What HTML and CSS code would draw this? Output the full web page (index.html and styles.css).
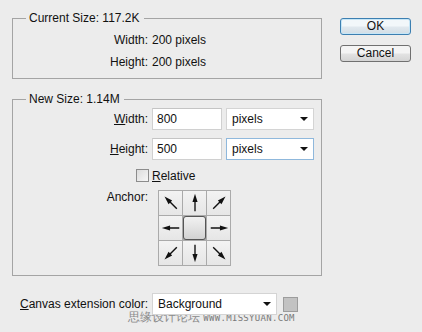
FILE: index.html
```html
<!DOCTYPE html>
<html>

<head>
    <title>Canvas Size</title>
    <link rel="stylesheet" href="styles.css">
</head>

<body>
    <svg class="defs" width="0" height="0">
        <symbol id="arrow" viewBox="0 0 24 24">
            <path d="M12 21V9" stroke="#111" stroke-width="1.5" fill="none"/>
            <path d="M12 2l-2.8 9h5.6z" fill="#111"/>
        </symbol>
    </svg>

    <div class="dialog">
        <div class="main">
            <fieldset class="group group-current">
                <legend>Current Size: 117.2K</legend>
                <div class="row info-row"><span class="label">Width:</span><span class="value">200 pixels</span></div>
                <div class="row info-row"><span class="label">Height:</span><span class="value">200 pixels</span></div>
            </fieldset>

            <fieldset class="group group-new">
                <legend>New Size: 1.14M</legend>
                <div class="row field-row">
                    <label class="label" for="newWidth"><u>W</u>idth:</label>
                    <input class="num-input" id="newWidth" type="text" value="800">
                    <div class="select units">pixels<span class="caret"></span></div>
                </div>
                <div class="row field-row">
                    <label class="label" for="newHeight"><u>H</u>eight:</label>
                    <input class="num-input" id="newHeight" type="text" value="500">
                    <div class="select units focused">pixels<span class="caret"></span></div>
                </div>
                <div class="row check-row">
                    <span class="label"><span class="check"></span></span>
                    <span class="value"><u>R</u>elative</span>
                </div>
                <div class="row anchor-row">
                    <span class="label">Anchor:</span>
                    <div class="anchor">
                        <div class="cell"><svg class="arr" style="transform: rotate(-45deg)"><use href="#arrow"/></svg></div>
                        <div class="cell"><svg class="arr"><use href="#arrow"/></svg></div>
                        <div class="cell"><svg class="arr" style="transform: rotate(45deg)"><use href="#arrow"/></svg></div>
                        <div class="cell"><svg class="arr" style="transform: rotate(-90deg)"><use href="#arrow"/></svg></div>
                        <div class="cell center"><span class="knob"></span></div>
                        <div class="cell"><svg class="arr" style="transform: rotate(90deg)"><use href="#arrow"/></svg></div>
                        <div class="cell"><svg class="arr" style="transform: rotate(-135deg)"><use href="#arrow"/></svg></div>
                        <div class="cell"><svg class="arr" style="transform: rotate(180deg)"><use href="#arrow"/></svg></div>
                        <div class="cell"><svg class="arr" style="transform: rotate(135deg)"><use href="#arrow"/></svg></div>
                    </div>
                </div>
            </fieldset>

            <div class="canvas-row">
                <span class="canvas-label"><u>C</u>anvas extension color:</span>
                <div class="select bg-select">Background<span class="caret"></span></div>
                <span class="swatch"></span>
            </div>
            <div class="watermark">思缘设计论坛 <span class="wm-url">WWW.MISSYUAN.COM</span></div>
        </div>

        <div class="buttons">
            <button class="btn btn-ok">OK</button>
            <button class="btn">Cancel</button>
        </div>
    </div>
</body>

</html>
```

FILE: styles.css
```css
body {
    margin: 0;
    background-color: #ececec;
    font-family: "Liberation Sans", Arial, sans-serif;
    font-size: 12px;
    color: #111;
}

.defs {
    position: absolute;
}

.dialog {
    display: flex;
    padding: 11px 0 0 12px;
}

.main {
    width: 310px;
}

.group {
    margin: 0;
    padding: 0;
    border: 1px solid #a4a4a4;
    min-width: 0;
}

.group legend {
    margin-left: 13px;
    padding: 0 4px 0 3px;
    line-height: 14px;
}

.group-current {
    padding: 4px 0 5px;
}

.group-new {
    margin-top: 13px;
    padding: 2px 0 9px;
}

.row {
    display: flex;
    align-items: center;
}

.label {
    width: 135px;
    text-align: right;
    padding-right: 4px;
    flex: none;
}

.info-row {
    height: 22px;
}

.field-row {
    height: 22px;
    margin-bottom: 8px;
}

.num-input {
    width: 70px;
    height: 22px;
    box-sizing: border-box;
    border: 1px solid #d0d0d0;
    border-top-color: #c4c4c4;
    background: #fff;
    font-family: inherit;
    font-size: 12px;
    padding: 0 4px;
    margin: 0;
    color: #111;
    outline: none;
}

.select {
    position: relative;
    height: 22px;
    box-sizing: border-box;
    border: 1px solid #d4d4d4;
    background: #fff;
    padding-left: 5px;
    line-height: 20px;
}

.units {
    width: 88px;
    margin-left: 4px;
}

.select.focused {
    border-color: #8fb8dc;
}

.caret {
    position: absolute;
    right: 5px;
    top: 8px;
    border-left: 4px solid transparent;
    border-right: 4px solid transparent;
    border-top: 4px solid #111;
}

.check-row {
    height: 15px;
    margin-bottom: 7px;
}

.check-row .label {
    display: flex;
    justify-content: flex-end;
    padding-right: 3px;
    width: 136px;
}

.check {
    width: 11px;
    height: 11px;
    border: 1px solid #8c8c8c;
    background: linear-gradient(135deg, #dcdcdc, #f6f6f6);
}

.anchor-row {
    align-items: flex-start;
}

.anchor-row .label {
    line-height: 14px;
    padding-right: 10px;
    width: 135px;
}

.anchor {
    display: grid;
    grid-template-columns: repeat(3, 23px);
    grid-template-rows: repeat(3, 24px);
    gap: 1px;
    padding: 1px;
    background: #aaaaaa;
}

.cell {
    background: linear-gradient(#f3f3f3, #e6e6e6);
    display: flex;
    align-items: center;
    justify-content: center;
}

.arr {
    width: 22px;
    height: 22px;
    overflow: visible;
}

.cell.center {
    background: #aaaaaa;
}

.knob {
    width: 23px;
    height: 24px;
    box-sizing: border-box;
    border: 1px solid #555;
    border-radius: 3px;
    background: linear-gradient(#f2f2f2, #d2d2d2);
}

.canvas-row {
    display: flex;
    align-items: center;
    margin-top: 17px;
    padding-left: 8px;
}

.canvas-label {
    width: 132px;
}

.bg-select {
    width: 125px;
}

.swatch {
    width: 13px;
    height: 13px;
    margin-left: 6px;
    border: 1px solid #9c9c9c;
    background: #c2c2c2;
}

.watermark {
    margin: -5px 0 0 116px;
    color: #8a8a8a;
    font-size: 12px;
    line-height: 14px;
}

.wm-url {
    font-family: "DejaVu Sans Mono", monospace;
    font-size: 9px;
    letter-spacing: 0.3px;
    color: #7a7a7a;
}

.buttons {
    display: flex;
    flex-direction: column;
    margin-left: 18px;
    padding-top: 7px;
}

.btn {
    width: 71px;
    height: 17px;
    margin-bottom: 10px;
    border: 1px solid #707070;
    border-radius: 3px;
    background: linear-gradient(#f4f4f4 45%, #e2e2e2 55%, #d4d4d4);
    font-family: inherit;
    font-size: 12px;
    color: #111;
    padding: 0;
    line-height: 15px;
}

.btn-ok {
    border-color: #3c7fb1;
    background: linear-gradient(#f2f7fa 45%, #e0e8ee 55%, #d2dde5);
    box-shadow: inset 0 0 0 1px #c6e6f7;
}
```
